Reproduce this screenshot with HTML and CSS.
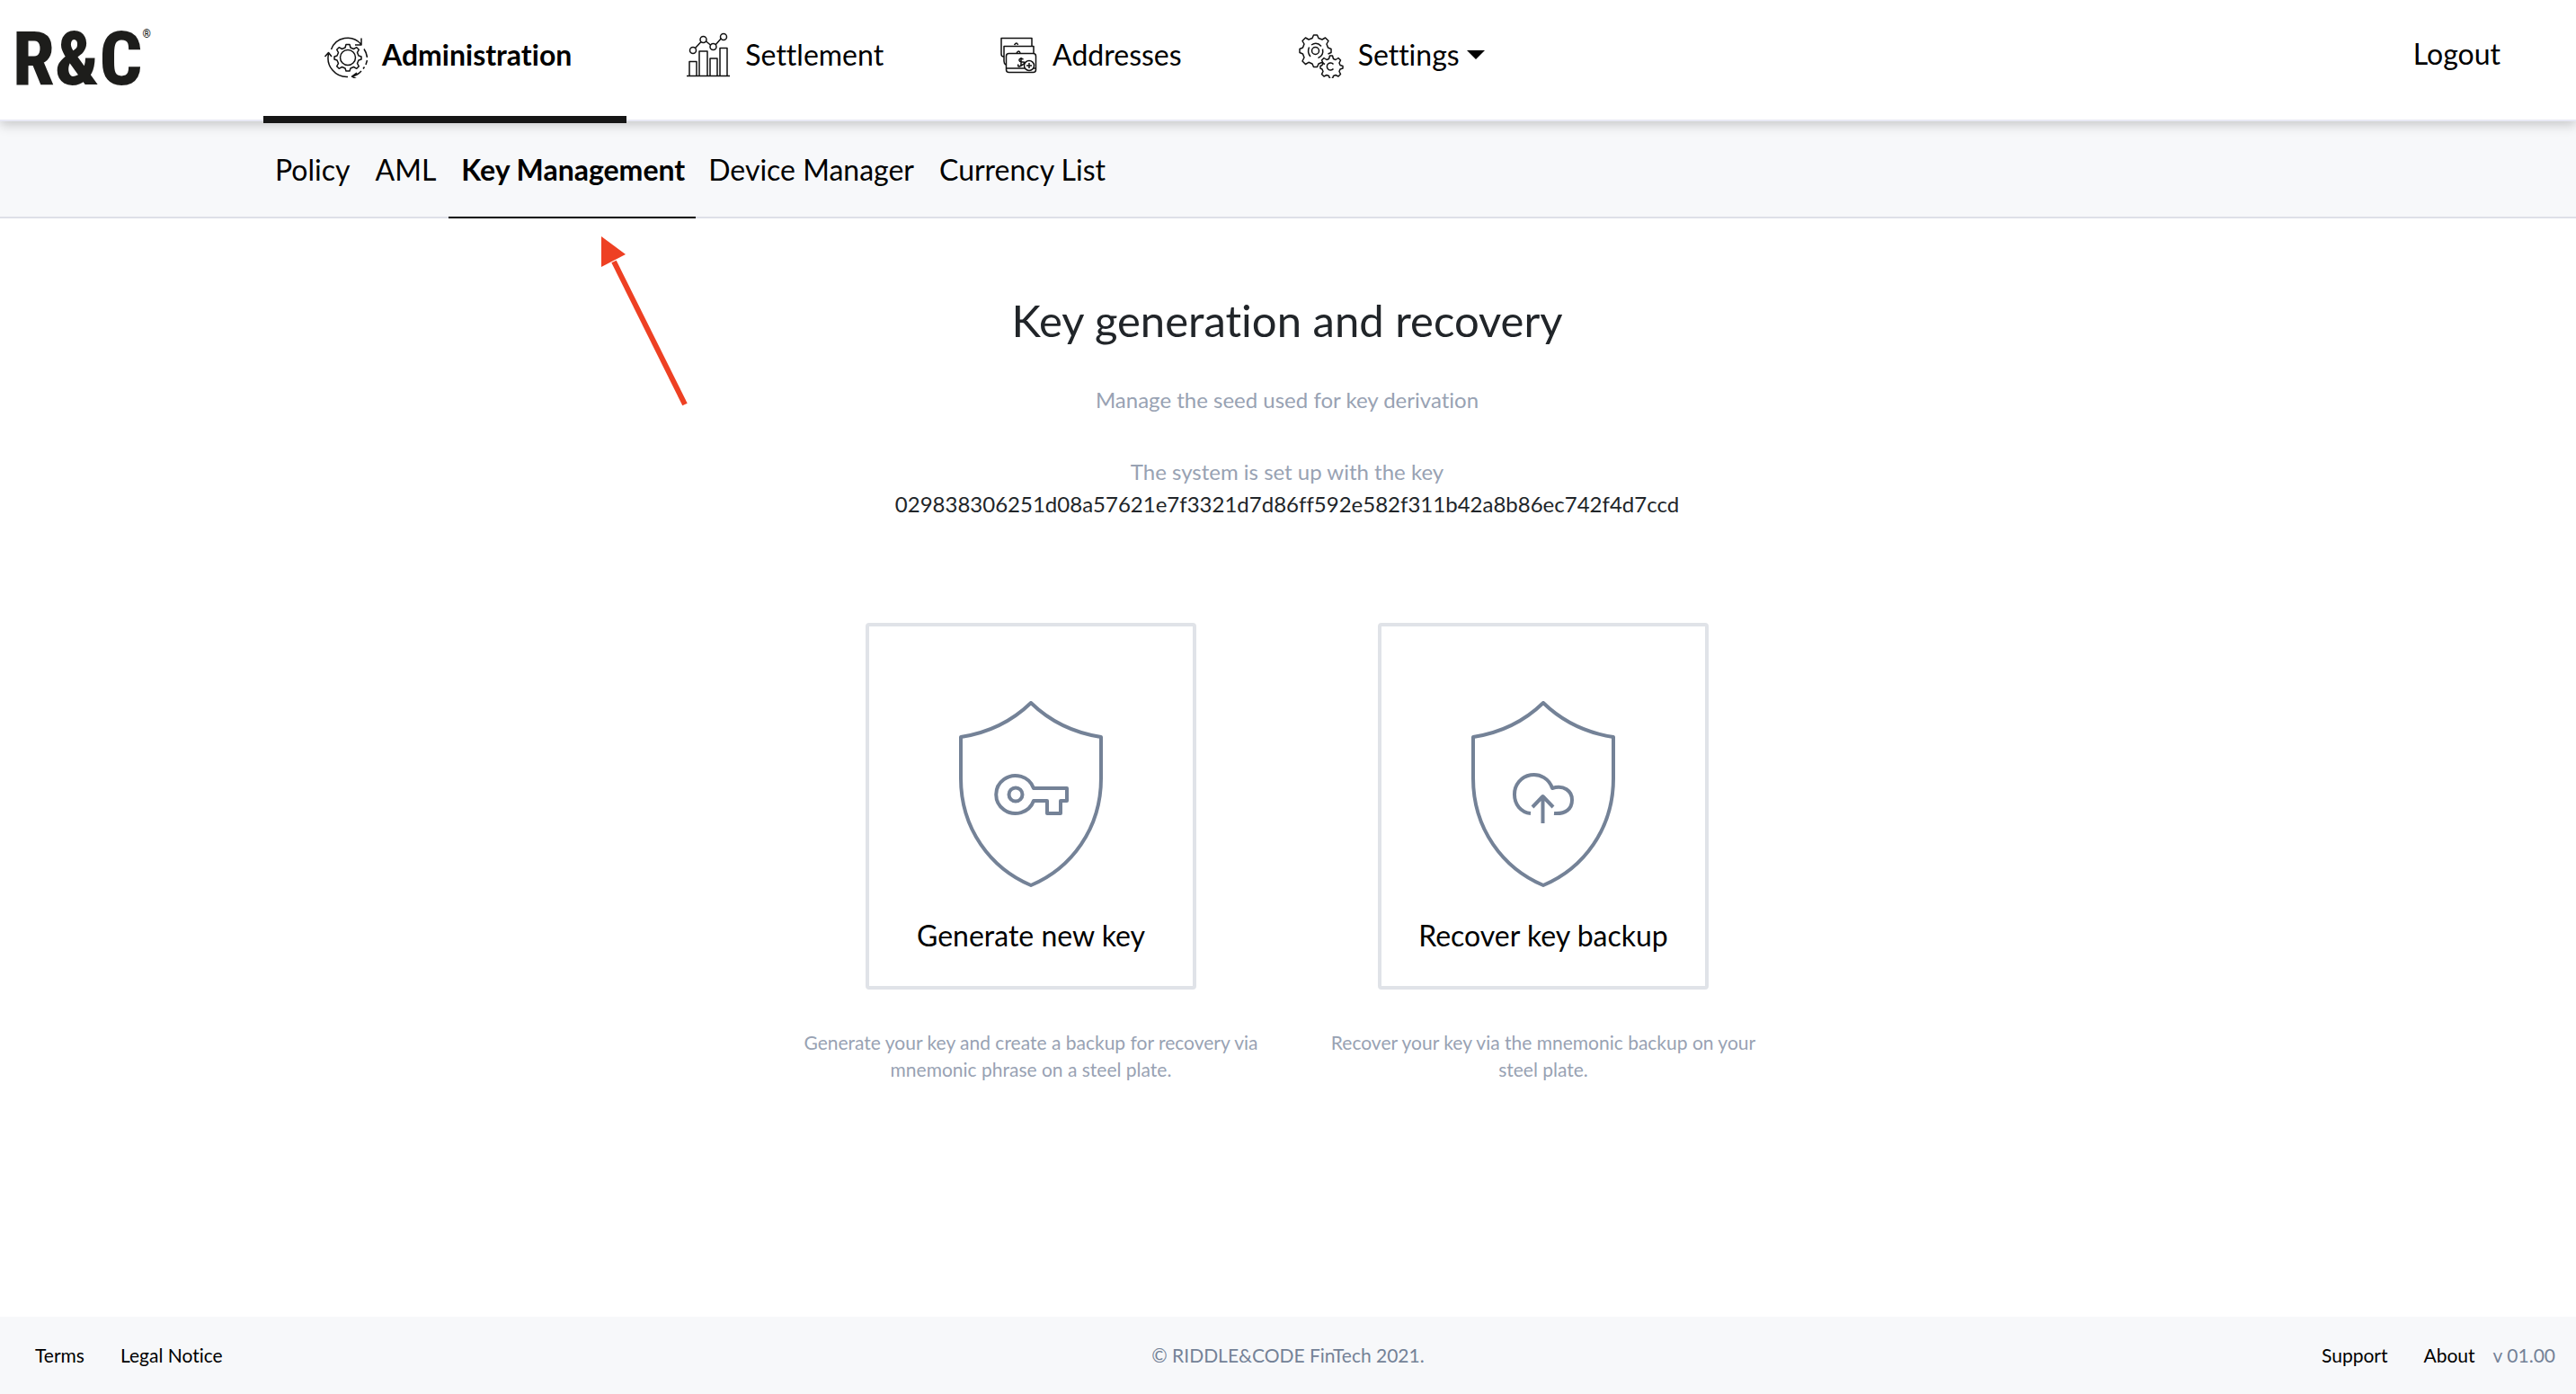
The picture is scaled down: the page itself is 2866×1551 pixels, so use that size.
FILE: index.html
```html
<!DOCTYPE html>
<html lang="en">
<head>
<meta charset="utf-8">
<title>Key Management</title>
<link rel="stylesheet" href="styles.css">
</head>
<body>
<header class="topbar">
  <a class="logo" href="#" aria-label="R&amp;C home">R&amp;C<sup class="logo-mark">®</sup></a>
  <nav class="mainnav" aria-label="Main">
    <a class="mainnav-item is-active" href="#">
      <svg class="icon icon-admin" viewBox="-3 0 52 52" aria-hidden="true">
        <path d="M8.500 20A19.500 19.500 0 0 1 41.500 14M42 7.500V15H35M45 19.500A21 21 0 0 1 48.500 29M48.500 32L47 37M45.500 39.500L44 41.500M42 44Q38 48.500 32 50M37 46L31.500 50L37 53M27 50.500A21 21 0 0 1 5.500 25M1.500 28L5.500 23.500L9 28"/>
        <circle cx="27" cy="29" r="8.500"/>
        <path d="M25 14.500h4l1 3.500 3.500 1.500 3.300-1.800 2.500 2.500-1.800 3.300 1.500 3.500 3 1v3l-3 1-1.500 3.500 1.800 3.300-2.500 2.500-3.300-1.800-3.500 1.500-1 3h-4l-1-3-3.500-1.500-3.300 1.800-2.500-2.500 1.800-3.300-1.500-3.500-3-1v-3l3-1 1.500-3.500-1.800-3.300 2.500-2.500 3.300 1.800 3.500-1.500z"/>
      </svg>
      <span>Administration</span>
    </a>
    <a class="mainnav-item" href="#">
      <svg class="icon icon-chart" viewBox="-1 -1 52 52" aria-hidden="true">
        <path d="M2 48.500h48M5 48V32.500h8V48M16 48V21h9V48M28 48V29h8V48M39 48V17.500h8V48M11.500 17.500l6.500-7M23 9.500l6 5M34 14l6.500-7.500"/>
        <circle cx="9" cy="20" r="3.500"/><circle cx="20.500" cy="8" r="3.500"/><circle cx="31.500" cy="16" r="3.500"/><circle cx="43" cy="5" r="3.500"/>
      </svg>
      <span>Settlement</span>
    </a>
    <a class="mainnav-item" href="#">
      <svg class="icon icon-cards" viewBox="0 -1 42 48" aria-hidden="true">
        <path d="M3.500 25Q1 25 1 22V4.500H35V13M6 34Q4 33 4 30V13.500H37V21"/>
        <rect x="6.500" y="21.500" width="33" height="21" rx="3"/>
        <path d="M6.500 38h33M15.500 12q3-4 4 0M18 21q3-4 4 0M25.500 28q-4-2-4.500.500t4 2.500-1 3.500-4-1M23 26v10"/>
        <circle class="icon-fill" cx="32" cy="35" r="5.500"/>
        <path d="M29 35h6M32 32v6"/>
      </svg>
      <span>Addresses</span>
    </a>
    <button class="mainnav-item" type="button" aria-haspopup="true">
      <svg class="icon icon-gears" viewBox="0 -1 50 52" aria-hidden="true">
        <path d="M29 35.500L25.500 33.500 22 35 20.500 38.500H16.500L15 35 11 33.300 7.500 35.500 4 32 6 28 4.500 24 1 22.500V18.500L4.500 17 6 13 4 9.500 7.500 6 11 8 15 6.500 16.500 3H20.500L22 6.500 26 8 29.500 6 33 9.500 31 13 32.500 17 36 18.500V22.500L32.500 24"/>
        <path d="M13 27Q9 22 11.500 16.500M14 14Q20 10 25 15.500M26.500 18.500Q28 26 21.500 28.500"/>
        <circle cx="18.500" cy="20.500" r="4"/>
        <path d="M34.500 26h3l1 3.500 2.500 1 3-2 2.500 2.500-1.500 3 1 2.500 3 1v2.500l-3 1-1 2.500 1.500 3-2.500 2.500-3-1.500-2.500 1-1 3h-3l-1-3-2.500-1-3 1.500-2.500-2.500 1.500-3-1-2.500-2-1v-2.500l2-1 1-2.500-1.500-3 2.500-2.500 3 2 2.500-1zM38.500 35.500a4 4 0 1 0 0 5"/>
      </svg>
      <span>Settings</span>
      <svg class="caret" viewBox="0 0 20 10" aria-hidden="true"><path d="M0 0h20l-10 10z"/></svg>
    </button>
  </nav>
  <a class="logout" href="#">Logout</a>
</header>
<nav class="subnav" aria-label="Administration">
  <a class="subnav-item" href="#">Policy</a>
  <a class="subnav-item" href="#">AML</a>
  <a class="subnav-item is-active" href="#">Key Management</a>
  <a class="subnav-item" href="#">Device Manager</a>
  <a class="subnav-item" href="#">Currency List</a>
</nav>
<svg class="pointer" viewBox="0 0 100 192" aria-hidden="true">
  <path class="pointer-line" d="M95 187L16 28"/>
  <path class="pointer-head" d="M2 0L29 20L2 34z"/>
</svg>
<main class="content">
  <h1 class="title">Key generation and recovery</h1>
  <p class="lead">Manage the seed used for key derivation</p>
  <p class="status">The system is set up with the key<br><span class="status-key">029838306251d08a57621e7f3321d7d86ff592e582f311b42a8b86ec742f4d7ccd</span></p>
  <div class="options">
    <section class="option">
      <button class="card" type="button">
        <svg class="shield" viewBox="0 0 160 207" aria-hidden="true">
          <path d="M80 2Q48 33 2 40V86C2 142 35 186 80 205C125 186 158 142 158 86V40Q112 33 80 2Z"/>
          <path d="M83 97A21.500 21 0 1 0 83 111H98V125H113V111H120V97Z"/>
          <circle cx="63" cy="104" r="7.500"/>
        </svg>
        <span>Generate new key</span>
      </button>
      <p class="caption">Generate your key and create a backup for recovery via mnemonic phrase on a steel plate.</p>
    </section>
    <section class="option">
      <button class="card" type="button">
        <svg class="shield" viewBox="0 0 160 207" aria-hidden="true">
          <path d="M80 2Q48 33 2 40V86C2 142 35 186 80 205C125 186 158 142 158 86V40Q112 33 80 2Z"/>
          <path d="M66 125C55 124 48 115 48 104A21.500 21.500 0 0 1 90 97C103 93 112 100 112 110C112 120 105 126 92 125M79.500 136V106M68 118L79.500 106L91 118"/>
        </svg>
        <span>Recover key backup</span>
      </button>
      <p class="caption">Recover your key via the mnemonic backup on your steel plate.</p>
    </section>
  </div>
</main>
<footer class="footer">
  <div class="footer-links footer-left"><a href="#">Terms</a><a href="#">Legal Notice</a></div>
  <p class="copyright">© RIDDLE&amp;CODE FinTech 2021.</p>
  <div class="footer-links footer-right"><a href="#">Support</a><a href="#">About</a><span class="version">v 01.00</span></div>
</footer>
</body>
</html>
```

FILE: styles.css
```css
* { box-sizing: border-box; }
body {
  margin: 0;
  min-height: 100vh;
  display: flex;
  flex-direction: column;
  position: relative;
  background: #fff;
  color: #212529;
  font-family: Lato, "Liberation Sans", sans-serif;
  font-size: 24px;
  line-height: 36px;
  font-variant-ligatures: none;
}
a { color: #000; text-decoration: none; }
button { font: inherit; font-variant-ligatures: none; color: #000; background: none; border: 0; padding: 0; cursor: pointer; }
h1, p { margin: 0; }

.topbar {
  display: flex;
  align-items: stretch;
  height: 135px;
  padding-right: 84px;
  border-bottom: 2px solid #e8e9f5;
  background: #fff;
  box-shadow: 0 4px 12px rgba(0, 0, 0, .2);
  z-index: 1;
  font-size: 32px;
}
.logo {
  width: 293px;
  padding: 16px 0 0 14px;
  color: #1d1d1b;
  font-family: "Roboto Condensed", Roboto, sans-serif;
  font-weight: 800;
  font-size: 84px;
  line-height: 100px;
  white-space: nowrap;
}
.logo-mark { font-size: 12px; line-height: 12px; vertical-align: 52px; }
.mainnav { display: flex; }
.mainnav-item {
  display: flex;
  align-items: center;
  gap: 16px;
  height: 137px;
  padding: 0 66px 8px 64px;
  border-bottom: 8px solid transparent;
}
.mainnav-item.is-active { padding-right: 61px; border-color: #161616; font-weight: 700; }
.icon { fill: none; stroke: #111; stroke-width: 1.5; stroke-linejoin: round; }
.icon-admin, .icon-chart { width: 52px; height: 52px; }
.icon-cards { width: 42px; height: 48px; }
.icon-gears { width: 50px; height: 52px; }
.icon-fill { fill: #fff; }
.caret { width: 20px; height: 10px; margin-left: -8px; }
.logout { margin-left: auto; padding-bottom: 14px; align-self: center; }

.subnav {
  display: flex;
  height: 108px;
  padding-left: 292px;
  background: #f7f8fa;
  border-bottom: 2px solid #dee0e8;
  font-size: 32px;
}
.subnav-item { height: 108px; padding: 0 14px; line-height: 108px; border-bottom: 2px solid transparent; }
.subnav-item.is-active { padding: 0 12px 0 14px; border-color: #000; font-weight: 700; }

.pointer { position: absolute; left: 667px; top: 263px; width: 100px; height: 192px; }
.pointer-line { stroke: #ee4023; stroke-width: 6; }
.pointer-head { fill: #ee4023; }

.content { flex: 1; padding: 83px 32px 0 30px; text-align: center; }
.title { font-size: 49px; line-height: 60px; font-weight: 400; }
.lead { margin-top: 41px; color: #98a2b3; }
.status { margin-top: 44px; color: #98a2b3; }
.status-key { color: #212529; }
.options { display: flex; justify-content: center; margin-top: 114px; }
.option { width: 570px; padding: 0 30px; }
.card {
  display: flex;
  flex-direction: column;
  align-items: center;
  gap: 30px;
  width: 368px;
  margin: 0 auto;
  padding: 83px 0 32px;
  border: 4px solid #e0e3e8;
  border-radius: 4px;
  font-size: 32px;
  line-height: 48px;
}
.shield { width: 160px; height: 207px; fill: none; stroke: #748297; stroke-width: 4; stroke-linejoin: round; }
.caption { margin-top: 44px; color: #98a2b3; font-size: 21px; line-height: 30px; }

.footer {
  display: grid;
  grid-template-columns: 1fr auto 1fr;
  align-items: center;
  height: 86px;
  padding: 0 23px;
  background: #f7f8fa;
  font-size: 21px;
}
.footer-links { display: flex; gap: 40px; }
.footer-left { padding-left: 16px; }
.footer-right { justify-content: flex-end; }
.version { margin-left: -20px; color: #748297; }
.copyright { color: #748297; }
```
